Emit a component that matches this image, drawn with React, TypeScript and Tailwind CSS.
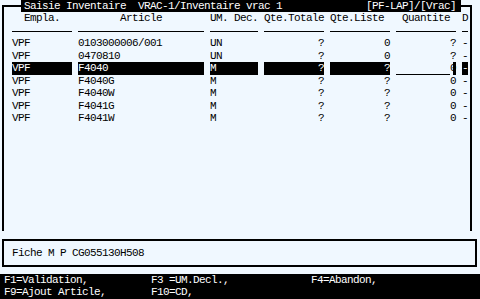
import React, { FC } from 'react';

interface LineItem {
  loc: string;
  art: string;
  um: string;
  tot: string;
  lst: string;
  qty: string;
  d: string;
  active?: boolean;
}

const lines: LineItem[] = [
  { loc: 'VPF', art: '0103000006/001', um: 'UN', tot: '?', lst: '0', qty: '?', d: '-' },
  { loc: 'VPF', art: '0470810', um: 'UN', tot: '?', lst: '0', qty: '?', d: '-' },
  { loc: 'VPF', art: 'F4040', um: 'M', tot: '?', lst: '?', qty: '0', d: '-', active: true },
  { loc: 'VPF', art: 'F4040G', um: 'M', tot: '?', lst: '?', qty: '0', d: '-' },
  { loc: 'VPF', art: 'F4040W', um: 'M', tot: '?', lst: '?', qty: '0', d: '-' },
  { loc: 'VPF', art: 'F4041G', um: 'M', tot: '?', lst: '?', qty: '0', d: '-' },
  { loc: 'VPF', art: 'F4041W', um: 'M', tot: '?', lst: '?', qty: '0', d: '-' },
];

const rowCls = 'flex gap-[6px] pl-[8px] h-[12.46px] leading-[12.46px] whitespace-pre';

const Rule: FC<{ w: string }> = ({ w }) => (
  <div className={`${w} h-full flex items-center`}>
    <div className="h-px w-full bg-black" />
  </div>
);

const DataRow: FC<{ item: LineItem }> = ({ item }) => {
  const hl = item.active ? 'bg-black text-white' : '';
  return (
    <div className={rowCls}>
      <div className={`w-[60px] ${hl}`}>{item.loc}</div>
      <div className={`w-[126px] ${hl}`}>{item.art}</div>
      <div className={`w-[48px] ${hl}`}>{item.um}</div>
      <div className={`w-[60px] text-right ${hl}`}>{item.tot}</div>
      <div className={`w-[60px] text-right ${hl}`}>{item.lst}</div>
      {item.active ? (
        <div className="w-[60px] flex">
          <div className="flex-1 border-b border-black" />
          <div className="w-[6px] border-r-[3px] border-black overflow-visible">{item.qty}</div>
        </div>
      ) : (
        <div className="w-[60px] text-right">{item.qty}</div>
      )}
      <div className={`w-[6px] ${hl}`}>{item.d}</div>
    </div>
  );
};

export default function App() {
  return (
    <div className="w-[480px] h-[299px] overflow-hidden bg-[#f0f8ff] text-black font-['Liberation_Mono',monospace] text-[11px] tracking-[-0.6px]">
      {/* framed list */}
      <div className="mt-[5px] ml-[2px] w-[470px] h-[226px] border-2 border-b-0 border-black">
        <div className="-mt-[7px] ml-[17px] w-[440px] h-[12.46px] leading-[12.46px] bg-black text-white flex justify-between pl-[3px] pr-[5px] whitespace-pre">
          <span>Saisie Inventaire  VRAC-1/Inventaire vrac 1</span>
          <span>[PF-LAP]/[Vrac]</span>
        </div>

        <div className={rowCls}>
          <div className="w-[60px] text-center">Empla.</div>
          <div className="w-[126px] text-center">Article</div>
          <div className="w-[48px]">UM. Dec.</div>
          <div className="w-[60px]">Qte.Totale</div>
          <div className="w-[60px]">Qte.Liste</div>
          <div className="w-[60px] text-center">Quantite</div>
          <div className="w-[6px]">D</div>
        </div>

        <div className={rowCls}>
          <Rule w="w-[60px]" />
          <Rule w="w-[126px]" />
          <Rule w="w-[48px]" />
          <Rule w="w-[60px]" />
          <Rule w="w-[60px]" />
          <Rule w="w-[60px]" />
          <Rule w="w-[6px]" />
        </div>

        {lines.map((l, i) => (
          <DataRow key={i} item={l} />
        ))}
      </div>

      {/* article label */}
      <div className="mt-[8px] ml-[2px] w-[475px] h-[28px] border-2 border-black flex items-center pl-[8px] whitespace-pre">
        Fiche M P CG055130H508
      </div>

      {/* function keys */}
      <div className="mt-[7px] h-[25px] bg-black text-white pl-[4px] whitespace-pre">
        <div className="flex h-[12.46px] leading-[12.46px]">
          <span className="w-[147px]">F1=Validation,</span>
          <span className="w-[160px]">F3 =UM.Decl.,</span>
          <span>F4=Abandon,</span>
        </div>
        <div className="flex h-[12.46px] leading-[12.46px]">
          <span className="w-[147px]">F9=Ajout Article,</span>
          <span className="w-[160px]">F10=CD,</span>
        </div>
      </div>
    </div>
  );
}
